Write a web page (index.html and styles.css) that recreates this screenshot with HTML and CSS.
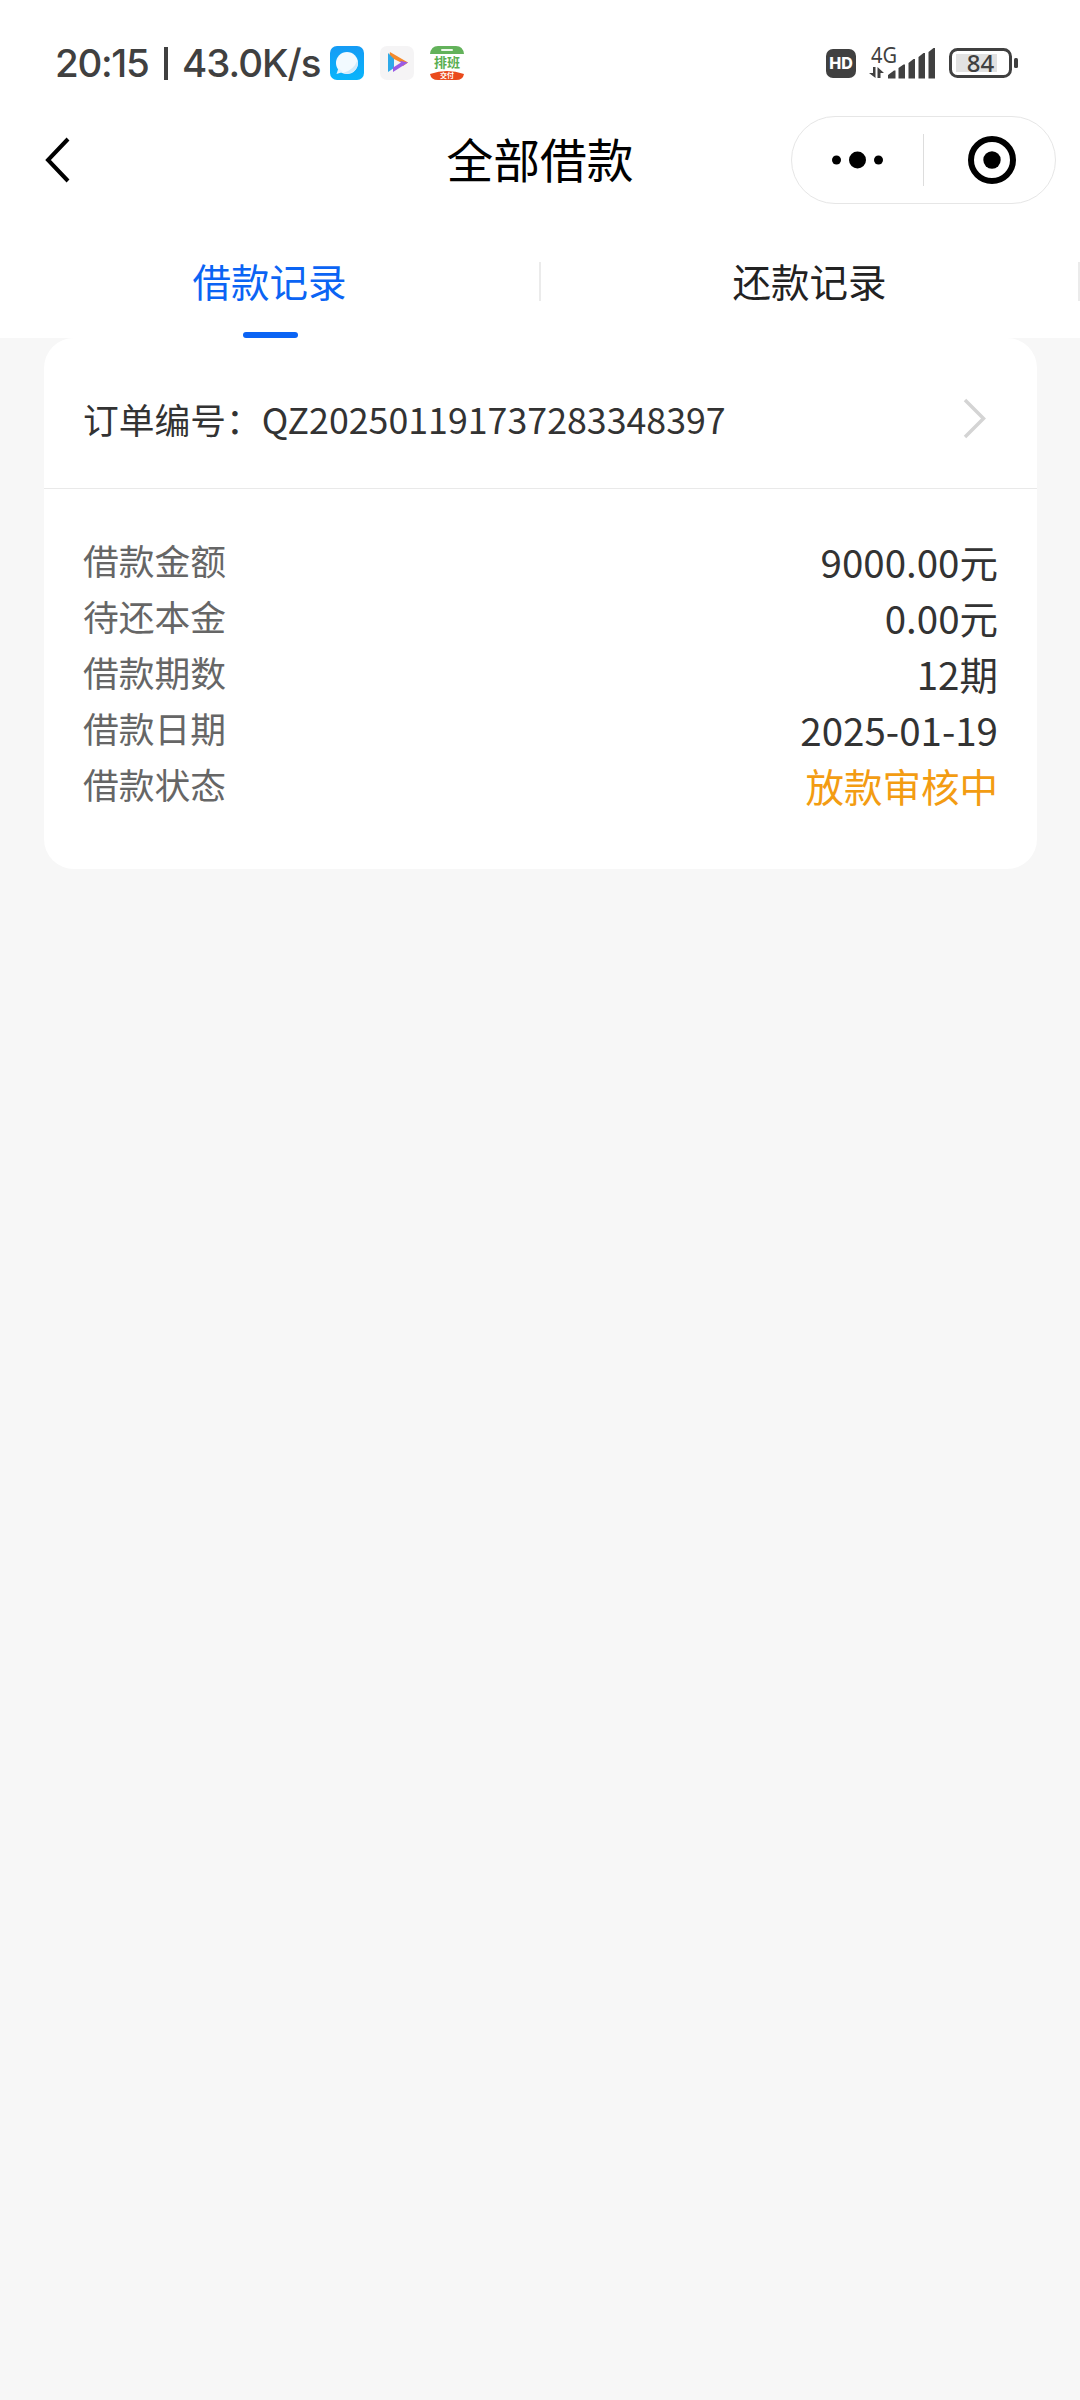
FILE: index.html
```html
<!DOCTYPE html>
<html lang="zh-CN">
<head>
<meta charset="utf-8">
<title>全部借款</title>
<link rel="stylesheet" href="styles.css">
</head>
<body>
<header class="top">
  <div class="status">
    <div class="status-left">
      <span class="clock">20:15</span>
      <span class="bar"></span>
      <span class="speed">43.0K/s</span>
      <svg class="app" viewBox="0 0 34 34"><defs><linearGradient id="sky" x2="0" y2="1"><stop stop-color="#159bf5"/><stop offset="1" stop-color="#08b5fb"/></linearGradient></defs><rect width="34" height="34" rx="7" fill="url(#sky)"/><circle cx="17" cy="17" r="11" fill="#f2faff"/><path d="M13 27Q24 24 27.500 14a11 11 0 0 1-14.500 13z" fill="#cfeafb"/><path d="M6.500 28 8.500 22l4.500 4z" fill="#e4f4fd"/></svg>
      <svg class="app" viewBox="0 0 34 34"><rect width="34" height="34" rx="7" fill="#f5f4f5"/><path d="M10 6 28 16.500 23 20 9 11z" fill="#f58a2c"/><path d="M8 7v19l6-4V13z" fill="#2da9e9"/><path d="M13 26 28 16.500l-7-1.500-8 6z" fill="#9a5be6"/><path d="M14 13v8l7-4.500z" fill="#f5f4f5"/></svg>
      <svg class="app" viewBox="0 0 34 34"><path d="M0 8Q1 0 8 0h18q7 0 8 8z" fill="#63b25b"/><rect x="11" y="3" width="12" height="2" rx="1" fill="#eef8ec"/><text x="17" y="21" class="app-name">排班</text><path d="M0 28q17-6 34 0-1 6-8 6H8q-7 0-8-6z" fill="#ea4a1c"/><text x="17" y="32" class="app-tag">交付</text></svg>
    </div>
    <div class="status-right">
      <span class="hd">HD</span>
      <svg class="signal" viewBox="0 0 66 38"><text x="2" y="18.500" class="net" textLength="26" lengthAdjust="spacingAndGlyphs">4G</text><path d="M0 29h4v-6h2.500v11zM8.500 34V23l6.500 6h-3.500v5z" fill="#404040"/><path d="M19 34.500v-3.500l6-4.500h1.500v8zM29.500 34.500V24l5-3.500H36v14zM39.500 34.500V19l5-4H46v19.500zM49.500 34.500V13l5-4H56v25.500zM59.500 34.500V8l5-4H66v30.500z" fill="#404040"/></svg>
      <svg class="battery" viewBox="0 0 69 30"><rect x="7" y="6" width="41" height="18" fill="#e2e2e2"/><rect x="1.500" y="1.500" width="60" height="27" rx="7" fill="none" stroke="#404040" stroke-width="3"/><rect x="65" y="10" width="4" height="10" rx="1.500" fill="#404040"/><text x="31.500" y="23.500" class="level">84</text></svg>
    </div>
  </div>
  <nav class="nav">
    <svg class="back" viewBox="0 0 26 48"><path d="M23 3 3 24l20 21" fill="none" stroke="#000" stroke-width="4"/></svg>
    <h1 class="title">全部借款</h1>
    <div class="capsule">
      <svg class="more" viewBox="0 0 52 18"><circle cx="4.500" cy="9" r="4.500"/><circle cx="25.500" cy="9" r="8.500"/><circle cx="46.500" cy="9" r="4.500"/></svg>
      <span class="split"></span>
      <svg class="close" viewBox="0 0 48 48"><circle cx="24" cy="24" r="21" fill="none" stroke="#000" stroke-width="6"/><circle cx="24" cy="24" r="8.700"/></svg>
    </div>
  </nav>
  <div class="tabs">
    <div class="tab active">借款记录</div>
    <div class="tab">还款记录</div>
  </div>
</header>
<main class="card">
  <div class="order">
    <span>订单编号：QZ202501191737283348397</span>
    <svg class="chevron" viewBox="0 0 24 42"><path d="M2 2 20.500 20.500 2 39" fill="none" stroke="#d4d4d4" stroke-width="3.500"/></svg>
  </div>
  <dl class="rows">
    <div class="row"><dt>借款金额</dt><dd>9000.00元</dd></div>
    <div class="row"><dt>待还本金</dt><dd>0.00元</dd></div>
    <div class="row"><dt>借款期数</dt><dd>12期</dd></div>
    <div class="row"><dt>借款日期</dt><dd>2025-01-19</dd></div>
    <div class="row"><dt>借款状态</dt><dd class="pending">放款审核中</dd></div>
  </dl>
</main>
</body>
</html>
```
FILE: styles.css
```css
* { box-sizing: border-box; }
body {
  margin: 0;
  min-height: 2400px;
  background: #f7f7f7;
  font-family: "Noto Sans CJK SC", sans-serif;
  color: #333;
}
svg { display: block; flex: none; overflow: visible; }
.top { height: 338px; background: #fff; }
.status {
  height: 110px;
  padding: 16px 62px 0 55px;
  display: flex;
  align-items: center;
  justify-content: space-between;
  color: #404040;
  font-family: Inter, sans-serif;
}
.status-left, .status-right { display: flex; align-items: center; }
.clock, .speed { font-size: 38.500px; font-weight: 500; line-height: 48px; white-space: nowrap; }
.clock { width: 94px; letter-spacing: -1.300px; }
.bar { width: 4px; height: 33px; margin: 0 14px 0 15px; background: #404040; }
.speed { width: 148px; letter-spacing: -1px; }
.app { width: 34px; height: 34px; margin-right: 16px; }
.app-name { font: 700 13px "Noto Sans CJK SC", sans-serif; fill: #5aae52; text-anchor: middle; }
.app-tag { font: 700 7px "Noto Sans CJK SC", sans-serif; fill: #fff; text-anchor: middle; }
.hd {
  width: 30px;
  height: 29px;
  margin-right: 13px;
  border-radius: 7px;
  background: #404040;
  color: #fff;
  font-size: 16px;
  font-weight: 800;
  line-height: 29px;
  text-align: center;
}
.signal { width: 66px; height: 38px; margin-right: 14px; }
.net { font: 400 21px "Noto Sans", sans-serif; fill: #404040; }
.battery { width: 69px; height: 30px; }
.level { font: 500 24px "Noto Sans", sans-serif; fill: #404040; text-anchor: middle; }

.nav {
  height: 100px;
  padding: 0 25px 0 45px;
  display: grid;
  grid-template-columns: 264px 1fr 264px;
  align-items: center;
}
.back { width: 26px; height: 48px; }
.title { margin: 0; padding: 0 20px 4px 0; color: #000; font-size: 46.750px; font-weight: 400; line-height: 64px; text-align: center; }
.capsule {
  width: 265px;
  height: 88px;
  border: 1px solid #e6e6e6;
  border-radius: 44px;
  display: flex;
  align-items: center;
}
.more { width: 52px; height: 18px; margin-left: 40px; }
.split { width: 1px; height: 52px; margin: 0 44px 0 39px; background: #ddd; }
.close { width: 48px; height: 48px; }

.tabs { height: 128px; display: grid; grid-template-columns: 1fr 1fr; }
.tab {
  position: relative;
  padding: 45px 1px 0 0;
  text-align: center;
  font-size: 38.500px;
  line-height: 50px;
  color: #222;
}
.active { color: #0b64f4; }
.tab::before {
  content: "";
  position: absolute;
  right: -1px;
  top: 52px;
  width: 2px;
  height: 39px;
  background: #ebebeb;
}
.tab:last-child::before { right: 0; }
.active::after {
  content: "";
  position: absolute;
  left: 243px;
  bottom: 0;
  width: 55px;
  height: 6px;
  border-radius: 3px;
  background: #0b64f4;
}

.card { width: 993px; height: 531px; margin-left: 44px; background: #fff; border-radius: 30px; }
.order {
  height: 151px;
  padding: 11px 50px 0 39px;
  border-bottom: 1px solid #e9e9e9;
  display: flex;
  align-items: center;
  justify-content: space-between;
  font-size: 35.750px;
  line-height: 50px;
}
.chevron { width: 24px; height: 42px; }
.rows { margin: 0; padding: 46px 39px 0; }
.row { height: 56px; display: flex; justify-content: space-between; line-height: 50px; }
.row dt { font-size: 35.750px; color: #666; }
.row dd { margin: 0; padding-top: 1px; font-size: 38.500px; }
.row .pending { color: #f39c12; }
```
